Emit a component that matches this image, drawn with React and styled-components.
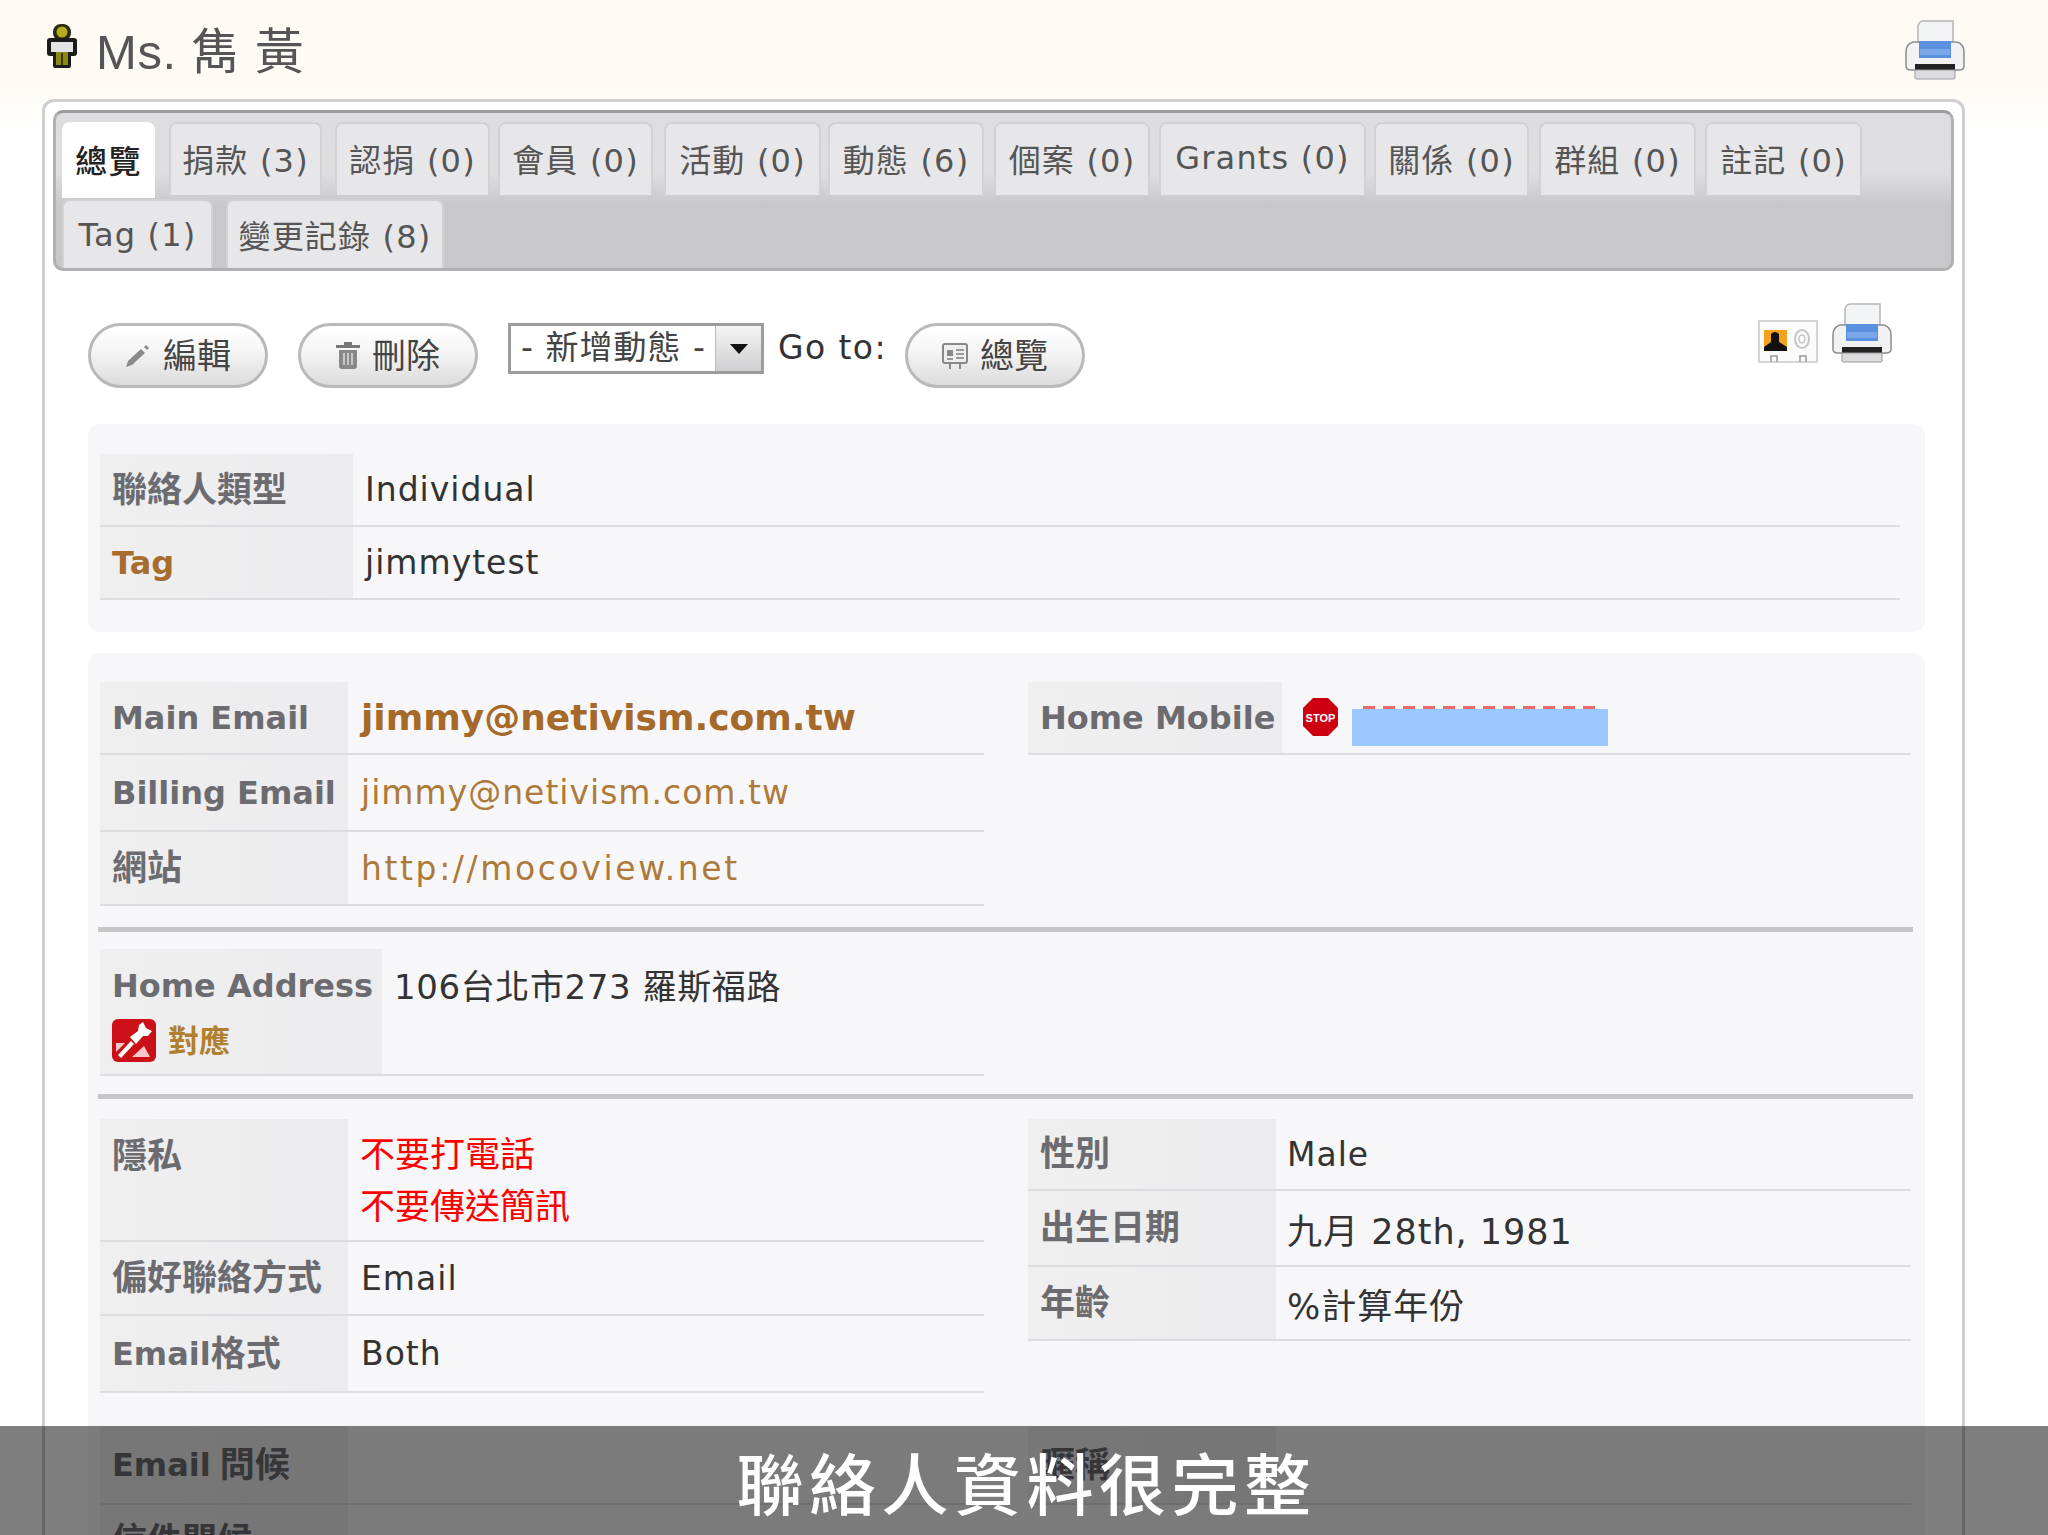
import React from 'react';
import styled, { createGlobalStyle } from 'styled-components';

const FONT = '"DejaVu Sans", "Noto Sans CJK TC", sans-serif';

const GlobalStyle = createGlobalStyle`
  html, body {
    margin: 0;
    padding: 0;
    background: #fff;
  }
`;

const Page = styled.div`
  position: relative;
  width: 2048px;
  height: 1535px;
  overflow: hidden;
  box-sizing: border-box;
  padding: 0 83px 0 42px;
  font-family: ${FONT};
  background: linear-gradient(#fefaf4 0, #fefaf4 90px, #fff 130px);
`;

const Header = styled.div`
  height: 99px;
  display: flex;
  align-items: flex-start;
  justify-content: space-between;
`;

const Title = styled.h1`
  margin: 0;
  padding-top: 21px;
  display: flex;
  align-items: flex-start;
  font-family: "Liberation Sans", "Noto Sans CJK TC", sans-serif;
  font-weight: 400;
  font-size: 49px;
  line-height: 62px;
  letter-spacing: 0.6px;
  color: #555;
`;

const PersonWrap = styled.span`
  display: flex;
  width: 54px;
  height: 44px;
  margin-top: 3px;
  padding-left: 4px;
  box-sizing: border-box;
`;

const TopPrinter = styled.span`
  padding-top: 20px;
`;

const Shell = styled.div`
  box-sizing: border-box;
  width: 1923px;
  height: 1500px;
  padding: 8px 8px 0;
  background: #fff;
  border: 3px solid #cfcfcf;
  border-bottom: 0;
  border-radius: 12px 12px 0 0;
`;

const TabBar = styled.div`
  box-sizing: border-box;
  height: 161px;
  padding: 9px 0 0 6px;
  border: 3px solid #b0b0b2;
  border-top-color: #9c9c9e;
  border-radius: 10px;
  background: linear-gradient(#dddddf 0, #dedee0 60px, #c8c8ca 92px, #c8c8ca 100%);
`;

const TabRow = styled.div`
  display: flex;
  height: ${p => p.$h}px;
`;

const Tab = styled.div`
  box-sizing: border-box;
  flex: none;
  width: ${p => p.$w}px;
  height: ${p => (p.$active ? 76 : p.$h)}px;
  margin-right: ${p => p.$mr || 0}px;
  padding-bottom: ${p => p.$lift || 0}px;
  display: flex;
  align-items: center;
  justify-content: center;
  background: ${p => (p.$active ? '#fff' : '#e7e7e9')};
  border: 2px solid ${p => (p.$active ? '#fff' : '#d2d2d4')};
  border-bottom: 0;
  border-radius: 8px 8px 0 0;
  font-size: 32px;
  letter-spacing: 1.2px;
  white-space: nowrap;
  color: ${p => (p.$active ? '#222' : '#555')};
  font-weight: ${p => (p.$active ? 500 : 400)};
  position: relative;
  z-index: ${p => (p.$active ? 1 : 0)};
`;

const Actions = styled.div`
  position: relative;
  height: 65px;
  margin: 52px 0 36px 35px;
  display: flex;
  align-items: flex-start;
`;

const PillButton = styled.div`
  box-sizing: border-box;
  width: 180px;
  height: 65px;
  margin-right: ${p => p.$mr || 0}px;
  display: flex;
  align-items: center;
  justify-content: center;
  gap: 12px;
  border: 3px solid #b9b9bb;
  border-radius: 33px;
  background: linear-gradient(#fff 0, #f6f6f6 40%, #dcdcde 100%);
  font-size: 34px;
  line-height: 40px;
  color: #444;
`;

const SelectBox = styled.div`
  box-sizing: border-box;
  width: 256px;
  height: 51px;
  margin-right: 14px;
  display: flex;
  border: 3px solid #9c9c9e;
  background: #fff;
`;

const SelectText = styled.div`
  flex: 1;
  padding: 2px 0 0 10px;
  font-size: 33px;
  line-height: 40px;
  letter-spacing: 1px;
  white-space: nowrap;
  color: #444;
`;

const SelectArrow = styled.div`
  width: 45px;
  display: flex;
  align-items: center;
  justify-content: center;
  background: linear-gradient(#f4f4f4, #cfcfd1);
  border-left: 1px solid #bbb;

  &::after {
    content: '';
    border: 9px solid transparent;
    border-top: 10px solid #111;
    border-bottom: 0;
  }
`;

const GoTo = styled.div`
  font-size: 33px;
  line-height: 38px;
  padding-top: 6px;
  margin-right: 18px;
  letter-spacing: 1.4px;
  color: #333;
  white-space: nowrap;
`;

const RightIcons = styled.div`
  position: absolute;
  top: -20px;
  right: 62px;
  display: flex;
  align-items: flex-end;
  gap: 14px;
`;

const Box = styled.div`
  box-sizing: border-box;
  width: 1837px;
  margin-left: 35px;
  margin-bottom: 21px;
  padding: ${p => p.$top}px 12px ${p => p.$bottom}px;
  border-radius: 12px;
  background: #f7f7f9;
`;

const Row = styled.div`
  display: flex;
  min-height: ${p => p.$h}px;
  width: ${p => p.$w || 'auto'};
  border-bottom: 2px solid #dddde0;
  box-sizing: border-box;
`;

const Label = styled.div`
  box-sizing: border-box;
  flex: none;
  width: ${p => p.$w}px;
  padding: ${p => (p.$top !== undefined ? `${p.$top}px 0 0 12px` : '0 0 0 12px')};
  display: ${p => (p.$stack ? 'block' : 'flex')};
  gap: ${p => (p.$gap === undefined ? 9 : p.$gap)}px;
  align-items: ${p => (p.$top !== undefined ? 'flex-start' : 'center')};
  background: linear-gradient(90deg, #efeff0, #ececee);
  font-size: 32px;
  font-weight: 700;
  line-height: 38px;
  color: ${p => p.$color || '#6c6c70'};
  white-space: nowrap;
`;

const Han = styled.span`
  font-size: 35px;
`;

const Value = styled.div`
  display: flex;
  align-items: ${p => (p.$top ? 'flex-start' : 'center')};
  padding-left: ${p => p.$pad || 13}px;
  padding-top: ${p => p.$top || 0}px;
  font-size: ${p => p.$size || 33}px;
  font-weight: ${p => (p.$bold ? 700 : 400)};
  letter-spacing: ${p => (p.$spaced === undefined ? 1 : p.$spaced)}px;
  color: ${p => p.$color || '#333'};
  white-space: nowrap;
`;

const RedLines = styled.div`
  padding: 10px 0 0 12px;
  font-size: 35px;
  line-height: 52px;
  color: #f00;
`;

const Columns = styled.div`
  display: grid;
  grid-template-columns: 884px 883px;
  column-gap: 44px;
  align-items: start;
  margin-top: ${p => p.$mt || 0}px;
`;

const Rule = styled.div`
  height: 5px;
  margin: ${p => p.$mt}px 0 ${p => p.$mb}px -2px;
  width: 1815px;
  background: #c6c6c8;
`;

const MapLink = styled.div`
  display: flex;
  align-items: center;
  gap: 12px;
  margin-top: 14px;
  font-size: 31px;
  color: #b0802f;
`;

const Redacted = styled.div`
  display: flex;
  flex-direction: column;
  width: 256px;
  margin: 24px 0 0 13px;
  align-self: flex-start;

  &::before {
    content: '';
    height: 3px;
    margin: 0 11px;
    background: repeating-linear-gradient(90deg, #ee6a6a 0 12px, transparent 12px 20px);
  }

  &::after {
    content: '';
    height: 37px;
    background: #99c9ff;
  }
`;

const StopWrap = styled.span`
  display: flex;
  align-self: flex-start;
  margin: 15px 0 0 20px;
`;

const Caption = styled.div`
  position: absolute;
  left: 0;
  right: 0;
  bottom: 0;
  height: 109px;
  padding-left: 5px;
  display: flex;
  align-items: center;
  justify-content: center;
  background: rgba(0, 0, 0, 0.5);
  color: #fff;
  font-family: "Noto Sans CJK TC", sans-serif;
  font-size: 67px;
  font-weight: 500;
  letter-spacing: 5.5px;
`;

function PersonIcon() {
  return (
    <svg width="32" height="44" viewBox="0 0 32 44">
      <rect x="7" y="0" width="18" height="17" rx="8" fill="#2b2b10" />
      <circle cx="16" cy="8" r="5.5" fill="#b5ad1e" />
      <rect x="1" y="14" width="30" height="18" rx="3" fill="#1c1c1c" />
      <rect x="5" y="18" width="22" height="10" fill="#e4e4e4" />
      <rect x="7" y="28" width="18" height="16" rx="2" fill="#1c1c1c" />
      <rect x="10" y="28" width="12" height="13" fill="#8f8a14" />
      <rect x="15" y="29" width="2" height="12" fill="#3a3808" />
    </svg>
  );
}

function PrinterIcon() {
  return (
    <svg width="60" height="60" viewBox="0 0 60 60">
      <path d="M13 24 L13 6 Q14 1 19 1 L48 1 L48 24 Z" fill="#f3f4f6" stroke="#b5b5b8" strokeWidth="1.5" />
      <path d="M8 22 L52 22 Q59 24 59 32 L59 46 Q59 50 54 50 L6 50 Q1 50 1 46 L1 32 Q1 24 8 22 Z" fill="#f2f2f4" stroke="#8c8c90" strokeWidth="1.5" />
      <rect x="14" y="21" width="32" height="17" fill="#5b8fe0" />
      <rect x="15" y="29" width="30" height="6" fill="#7aa7ea" />
      <rect x="10" y="44" width="40" height="6" fill="#222" />
      <path d="M10 50 L50 50 L50 58 Q50 59 48 59 L12 59 Q10 59 10 58 Z" fill="#dcdcde" stroke="#9a9a9e" strokeWidth="1" />
    </svg>
  );
}

function VcardIcon() {
  return (
    <svg width="60" height="43" viewBox="0 0 60 43">
      <rect x="1" y="1" width="58" height="41" fill="#fbfbfb" stroke="#c8c8ca" strokeWidth="1.5" />
      <rect x="6" y="10" width="23" height="21" fill="#f4a21c" />
      <path d="M6 31 L6 27 L13 22 L13 14 Q17 10 21 14 L21 22 L29 27 L29 31 Z" fill="#111" />
      <ellipse cx="44" cy="19" rx="7" ry="9" fill="none" stroke="#c4c4c6" strokeWidth="2" />
      <ellipse cx="44" cy="19" rx="3" ry="4" fill="none" stroke="#c4c4c6" strokeWidth="1.5" />
      <path d="M13 42 V36 H19 V42 M42 42 V36 H48 V42" fill="none" stroke="#999" strokeWidth="1.5" />
    </svg>
  );
}

function PencilIcon() {
  return (
    <svg width="26" height="26" viewBox="0 0 26 26">
      <path d="M1 24 L3 18 L16 6 L20 10 L7 22 Z" fill="#8a8a8c" />
      <path d="M19 4 L21 2 L24 5 L22 7 Z" fill="#8a8a8c" />
    </svg>
  );
}

function TrashIcon() {
  return (
    <svg width="24" height="28" viewBox="0 0 24 28">
      <rect x="0" y="3" width="24" height="3" fill="#777" />
      <rect x="8" y="0" width="8" height="3" fill="#777" />
      <path d="M3 8 H21 V24 Q21 27 18 27 H6 Q3 27 3 24 Z" fill="#888" />
      <path d="M8 11 V23 M12 11 V23 M16 11 V23" stroke="#ddd" strokeWidth="1.5" />
    </svg>
  );
}

function BoardIcon() {
  return (
    <svg width="26" height="28" viewBox="0 0 26 28">
      <rect x="1" y="2" width="24" height="19" rx="2" fill="#eee" stroke="#888" strokeWidth="2" />
      <rect x="5" y="8" width="6" height="6" fill="#888" />
      <path d="M14 8 H22 M14 12 H22 M14 16 H22 M5 17 H11" stroke="#999" strokeWidth="2" />
      <path d="M8 21 V27 M18 21 V27" stroke="#888" strokeWidth="2" />
    </svg>
  );
}

function StopIcon() {
  return (
    <svg width="37" height="40" viewBox="0 0 37 40">
      <path d="M11 1 H26 L36 11 V29 L26 39 H11 L1 29 V11 Z" fill="#cc0010" />
      <text x="18.5" y="25" textAnchor="middle" fontFamily="Liberation Sans, sans-serif" fontSize="11" fontWeight="700" fill="#fff">STOP</text>
    </svg>
  );
}

function MapIcon() {
  return (
    <svg width="44" height="43" viewBox="0 0 44 43">
      <rect x="0" y="0" width="44" height="43" rx="6" fill="#cc1018" />
      <path d="M31 3 L34 9 L40 12 L36 17 L31 17 L24 25 L18 18 L26 12 L27 6 Z" fill="#fff" />
      <path d="M6 36 L19 22 L22 25 L9 39 Z" fill="#fff" />
      <path d="M4 24 H13 L4 33 Z M20 38 L32 27 L38 38 Z" fill="#f5c9cb" />
    </svg>
  );
}

const ROW_ONE = [
  ['總覽', 93, 14, true],
  ['捐款 (3)', 153, 13],
  ['認捐 (0)', 155, 8],
  ['會員 (0)', 155, 11],
  ['活動 (0)', 157, 7],
  ['動態 (6)', 156, 10],
  ['個案 (0)', 156, 9],
  ['Grants (0)', 207, 8],
  ['關係 (0)', 155, 10],
  ['群組 (0)', 157, 9],
  ['註記 (0)', 157, 0],
];

export default function App() {
  return (
    <Page>
      <GlobalStyle />
      <Header>
        <Title>
          <PersonWrap><PersonIcon /></PersonWrap>
          Ms. 雋 黃
        </Title>
        <TopPrinter><PrinterIcon /></TopPrinter>
      </Header>
      <Shell>
        <TabBar>
          <TabRow $h={77}>
            {ROW_ONE.map(([name, w, mr, active]) => (
              <Tab key={name} $w={w} $mr={mr} $h={73} $lift={4} $active={active}>{name}</Tab>
            ))}
          </TabRow>
          <TabRow $h={68}>
            <Tab $w={151} $mr={13} $h={69}>Tag (1)</Tab>
            <Tab $w={218} $h={69} $lift={2}>變更記錄 (8)</Tab>
          </TabRow>
        </TabBar>

        <Actions>
          <PillButton $mr={30}><PencilIcon />編輯</PillButton>
          <PillButton $mr={30}><TrashIcon />刪除</PillButton>
          <SelectBox>
            <SelectText>- 新增動態 -</SelectText>
            <SelectArrow />
          </SelectBox>
          <GoTo>Go to:</GoTo>
          <PillButton><BoardIcon />總覽</PillButton>
          <RightIcons>
            <VcardIcon />
            <PrinterIcon />
          </RightIcons>
        </Actions>

        <Box $top={30} $bottom={32}>
          <Row $h={73} $w="1800px">
            <Label $w={253}><Han>聯絡人類型</Han></Label>
            <Value $pad={12}>Individual</Value>
          </Row>
          <Row $h={73} $w="1800px">
            <Label $w={253} $color="#a86c2e">Tag</Label>
            <Value $pad={12}>jimmytest</Value>
          </Row>
        </Box>

        <Box $top={29} $bottom={0}>
          <Columns>
            <div>
              <Row $h={73}>
                <Label $w={248}>Main Email</Label>
                <Value $bold $size={36} $color="#a5692a" $spaced={0}>jimmy@netivism.com.tw</Value>
              </Row>
              <Row $h={77}>
                <Label $w={248}>Billing Email</Label>
                <Value $color="#ae7a3a" $spaced={1}>jimmy@netivism.com.tw</Value>
              </Row>
              <Row $h={74}>
                <Label $w={248}><Han>網站</Han></Label>
                <Value $color="#ae7a3a" $spaced={2.6}>http://mocoview.net</Value>
              </Row>
            </div>
            <Row $h={73}>
              <Label $w={254}>Home Mobile</Label>
              <StopWrap><StopIcon /></StopWrap>
              <Redacted />
            </Row>
          </Columns>

          <Rule $mt={21} $mb={17} />

          <Row $h={127} $w="884px">
            <Label $w={282} $top={18} $stack>
              Home Address
              <MapLink><MapIcon />對應</MapLink>
            </Label>
            <Value $pad={12} $top={11} $size={34} $spaced={0.6}>106台北市273 羅斯福路</Value>
          </Row>

          <Rule $mt={18} $mb={20} />

          <Columns>
            <div>
              <Row $h={123}>
                <Label $w={248} $top={18}><Han>隱私</Han></Label>
                <RedLines>不要打電話<br />不要傳送簡訊</RedLines>
              </Row>
              <Row $h={74}>
                <Label $w={248}><Han>偏好聯絡方式</Han></Label>
                <Value>Email</Value>
              </Row>
              <Row $h={77}>
                <Label $w={248} $gap={0}>Email<Han>格式</Han></Label>
                <Value>Both</Value>
              </Row>
            </div>
            <div>
              <Row $h={72}>
                <Label $w={248}><Han>性別</Han></Label>
                <Value $pad={11}>Male</Value>
              </Row>
              <Row $h={76}>
                <Label $w={248}><Han>出生日期</Han></Label>
                <Value $pad={11} $size={35}>九月 28th, 1981</Value>
              </Row>
              <Row $h={74}>
                <Label $w={248}><Han>年齡</Han></Label>
                <Value $pad={11} $size={35}>%計算年份</Value>
              </Row>
            </div>
          </Columns>

          <Columns $mt={33}>
            <div>
              <Row $h={79}>
                <Label $w={248}>Email <Han>問候</Han></Label>
              </Row>
              <Row $h={74}>
                <Label $w={248}><Han>信件問候</Han></Label>
              </Row>
            </div>
            <Row $h={79}>
              <Label $w={248}><Han>暱稱</Han></Label>
            </Row>
          </Columns>
        </Box>
      </Shell>
      <Caption>聯絡人資料很完整</Caption>
    </Page>
  );
}
